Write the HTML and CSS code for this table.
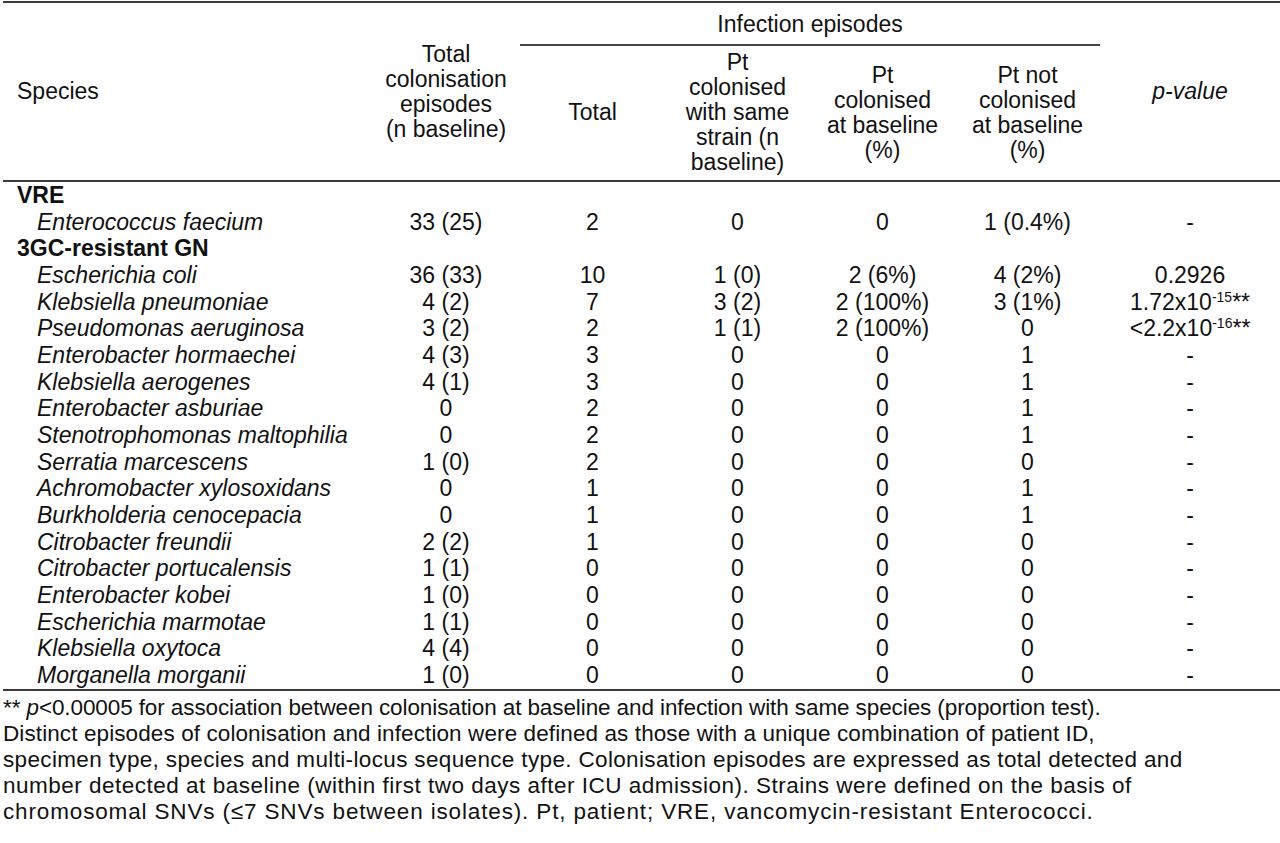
FILE: index.html
```html
<!DOCTYPE html>
<html lang="en">
<head>
<meta charset="utf-8">
<title>Colonisation and infection episodes</title>
<link rel="stylesheet" href="styles.css">
</head>
<body>
<div class="page">
<table class="tbl">
  <colgroup>
    <col class="c-species">
    <col class="c-col">
    <col class="c-num">
    <col class="c-num">
    <col class="c-num">
    <col class="c-num">
    <col class="c-p">
  </colgroup>
  <thead>
    <tr class="h1">
      <th rowspan="2" class="species-h">Species</th>
      <th rowspan="2">Total<br>colonisation<br>episodes<br>(n baseline)</th>
      <th colspan="4" class="group-h">Infection episodes</th>
      <th rowspan="2" class="italic">p-value</th>
    </tr>
    <tr class="h2">
      <th>Total</th>
      <th>Pt<br>colonised<br>with same<br>strain (n<br>baseline)</th>
      <th>Pt<br>colonised<br>at baseline<br>(%)</th>
      <th>Pt not<br>colonised<br>at baseline<br>(%)</th>
    </tr>
  </thead>
  <tbody>
    <tr class="grp"><td colspan="7">VRE</td></tr>
    <tr><td class="sp">Enterococcus faecium</td><td>33 (25)</td><td>2</td><td>0</td><td>0</td><td>1 (0.4%)</td><td>-</td></tr>
    <tr class="grp"><td colspan="7">3GC-resistant GN</td></tr>
    <tr><td class="sp">Escherichia coli</td><td>36 (33)</td><td>10</td><td>1 (0)</td><td>2 (6%)</td><td>4 (2%)</td><td>0.2926</td></tr>
    <tr><td class="sp">Klebsiella pneumoniae</td><td>4 (2)</td><td>7</td><td>3 (2)</td><td>2 (100%)</td><td>3 (1%)</td><td>1.72x10<sup>-15</sup>**</td></tr>
    <tr><td class="sp">Pseudomonas aeruginosa</td><td>3 (2)</td><td>2</td><td>1 (1)</td><td>2 (100%)</td><td>0</td><td>&lt;2.2x10<sup>-16</sup>**</td></tr>
    <tr><td class="sp">Enterobacter hormaechei</td><td>4 (3)</td><td>3</td><td>0</td><td>0</td><td>1</td><td>-</td></tr>
    <tr><td class="sp">Klebsiella aerogenes</td><td>4 (1)</td><td>3</td><td>0</td><td>0</td><td>1</td><td>-</td></tr>
    <tr><td class="sp">Enterobacter asburiae</td><td>0</td><td>2</td><td>0</td><td>0</td><td>1</td><td>-</td></tr>
    <tr><td class="sp">Stenotrophomonas maltophilia</td><td>0</td><td>2</td><td>0</td><td>0</td><td>1</td><td>-</td></tr>
    <tr><td class="sp">Serratia marcescens</td><td>1 (0)</td><td>2</td><td>0</td><td>0</td><td>0</td><td>-</td></tr>
    <tr><td class="sp">Achromobacter xylosoxidans</td><td>0</td><td>1</td><td>0</td><td>0</td><td>1</td><td>-</td></tr>
    <tr><td class="sp">Burkholderia cenocepacia</td><td>0</td><td>1</td><td>0</td><td>0</td><td>1</td><td>-</td></tr>
    <tr><td class="sp">Citrobacter freundii</td><td>2 (2)</td><td>1</td><td>0</td><td>0</td><td>0</td><td>-</td></tr>
    <tr><td class="sp">Citrobacter portucalensis</td><td>1 (1)</td><td>0</td><td>0</td><td>0</td><td>0</td><td>-</td></tr>
    <tr><td class="sp">Enterobacter kobei</td><td>1 (0)</td><td>0</td><td>0</td><td>0</td><td>0</td><td>-</td></tr>
    <tr><td class="sp">Escherichia marmotae</td><td>1 (1)</td><td>0</td><td>0</td><td>0</td><td>0</td><td>-</td></tr>
    <tr><td class="sp">Klebsiella oxytoca</td><td>4 (4)</td><td>0</td><td>0</td><td>0</td><td>0</td><td>-</td></tr>
    <tr><td class="sp">Morganella morganii</td><td>1 (0)</td><td>0</td><td>0</td><td>0</td><td>0</td><td>-</td></tr>
  </tbody>
</table>
<div class="notes">
  <p class="line l1">** <i>p</i>&lt;0.00005 for association between colonisation at baseline and infection with same species (proportion test).</p>
  <p class="line l2">Distinct episodes of colonisation and infection were defined as those with a unique combination of patient ID,</p>
  <p class="line l3">specimen type, species and multi-locus sequence type. Colonisation episodes are expressed as total detected and</p>
  <p class="line l4">number detected at baseline (within first two days after ICU admission). Strains were defined on the basis of</p>
  <p class="line l5">chromosomal SNVs (≤7 SNVs between isolates). Pt, patient; VRE, vancomycin-resistant Enterococci.</p>
</div>
</div>
</body>
</html>
```
FILE: styles.css
```css
html, body {
  margin: 0;
  padding: 0;
  background: #ffffff;
}
body {
  font-family: "Liberation Sans", Arial, sans-serif;
  font-size: 23px;
  color: #111;
}
.page {
  padding: 1px 0 0 3px;
}
.tbl {
  border-collapse: collapse;
  table-layout: fixed;
  width: 1277px;
  border-top: 2px solid #3c3c3c;
  border-bottom: 2px solid #3c3c3c;
}
.c-species { width: 369px; }
.c-col { width: 148px; }
.c-num { width: 145px; }
.c-p { width: 180px; }

.tbl th {
  font-weight: normal;
  text-align: center;
  vertical-align: middle;
  line-height: 25px;
  padding: 0;
  white-space: nowrap;
}
.tbl thead tr.h2 th {
  border-bottom: 2px solid #3c3c3c;
  padding: 4px 0 5px;
}
.tbl thead th[rowspan] {
  border-bottom: 2px solid #3c3c3c;
}
.tbl th.group-h {
  padding: 9px 0 7px;
  border-bottom: 2px solid #444;
}
.tbl th.species-h {
  text-align: left;
  padding-left: 14px;
}
.italic {
  font-style: italic;
}
.tbl td {
  padding: 0;
  height: 26.67px;
  line-height: 26.67px;
  text-align: center;
  white-space: nowrap;
}
.tbl tr.grp td {
  text-align: left;
  font-weight: bold;
  padding-left: 14px;
}
.tbl td.sp {
  text-align: left;
  font-style: italic;
  padding-left: 34px;
}
sup {
  font-size: 14px;
  line-height: 0;
  vertical-align: 8px;
}
.notes {
  margin-top: 4px;
  font-size: 22.5px;
}
.notes .line {
  margin: 0;
  line-height: 26px;
  white-space: nowrap;
}
.notes .l1 { letter-spacing: -0.1px; }
.notes .l2 { letter-spacing: 0.1px; }
.notes .l3 { letter-spacing: 0.35px; }
.notes .l4 { letter-spacing: 0.5px; }
.notes .l5 { letter-spacing: 0.85px; }
```
